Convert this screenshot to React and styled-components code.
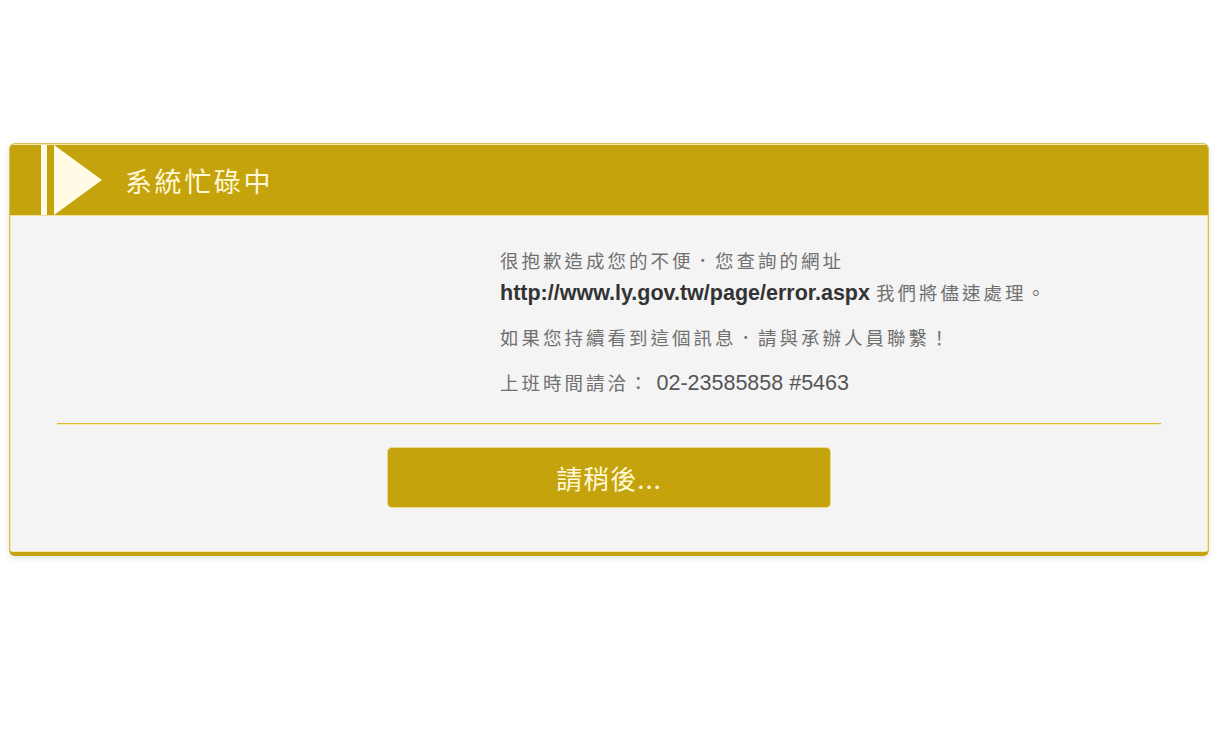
import React from "react";
import styled, { createGlobalStyle } from "styled-components";

const Global = createGlobalStyle`
  html, body { margin: 0; padding: 0; background: #ffffff; }
  body { font-family: "Liberation Sans", Arial, "Noto Sans CJK TC", sans-serif; }
`;

const Page = styled.div`
  padding: 143px 0 0 9px;
  min-height: 747px;
  box-sizing: border-box;
`;

const Panel = styled.section`
  width: 1200px;
  box-sizing: border-box;
  background: #f4f4f4;
  border: 1px solid #d9c150;
  border-bottom: 4px solid #c4a30c;
  border-radius: 6px;
  box-shadow: 0 2px 6px rgba(0, 0, 0, 0.12), inset 0 0 0 1px #f3e6a6;
  overflow: hidden;
`;

const Header = styled.header`
  display: flex;
  align-items: center;
  height: 70px;
  margin-top: 1px;
  padding-left: 31px;
  background: #c4a30c;
  border-bottom: 1px solid #eedf9a;
`;

const Mark = styled.svg`
  flex: none;
  display: block;
`;

const Title = styled.h1`
  margin: 0 0 0 22px;
  font-family: "Noto Sans CJK TC", "Liberation Sans", sans-serif;
  font-size: 27px;
  font-weight: 400;
  letter-spacing: 2.6px;
  color: #fff7d6;
`;

const Body = styled.div`
  padding: 29px 47px 45px 47px;
`;

const Message = styled.div`
  padding-left: 443px;
  font-size: 21.5px;
  color: #555;
`;

const Para = styled.p`
  margin: 0 0 13px;
  line-height: 32px;
  &:last-child { margin-bottom: 0; }
`;

const Zh = styled.span`
  font-family: "Noto Sans CJK TC", sans-serif;
  font-size: 18.5px;
  line-height: 20px;
  letter-spacing: 3px;
  color: #707070;
`;

const Url = styled.b`
  font-weight: 700;
  color: #333;
`;

const Phone = styled.span`
  color: #555;
`;

const Divider = styled.hr`
  margin: 24px 0 23px;
  border: none;
  height: 2px;
  background: linear-gradient(#d8bd3c 0 1px, #f6e9b0 1px 2px);
`;

const Actions = styled.div`
  display: flex;
  justify-content: center;
`;

const Button = styled.button`
  width: 442px;
  height: 59px;
  border: none;
  border-radius: 4px;
  background: #c4a30c;
  color: #fff7d6;
  font-family: "Noto Sans CJK TC", "Liberation Sans", sans-serif;
  font-size: 26px;
  letter-spacing: 1px;
  box-shadow: 0 0 0 1px #e9d98a;
  cursor: default;
`;

export default function App() {
  return (
    <Page>
      <Global />
      <Panel>
        <Header>
          <Mark width="62" height="70" viewBox="0 0 62 70">
            <rect x="0" y="0" width="6" height="70" fill="#fffbe6" />
            <polygon points="13,0 61,35 13,70" fill="#fffbe6" />
          </Mark>
          <Title>系統忙碌中</Title>
        </Header>
        <Body>
          <Message>
            <Para>
              <Zh>很抱歉造成您的不便．您查詢的網址</Zh>
              <br />
              <Url>http://www.ly.gov.tw/page/error.aspx</Url> <Zh>我們將儘速處理。</Zh>
            </Para>
            <Para>
              <Zh>如果您持續看到這個訊息．請與承辦人員聯繫！</Zh>
            </Para>
            <Para>
              <Zh>上班時間請洽：</Zh> <Phone>02-23585858 #5463</Phone>
            </Para>
          </Message>
          <Divider />
          <Actions>
            <Button type="button">請稍後...</Button>
          </Actions>
        </Body>
      </Panel>
    </Page>
  );
}
